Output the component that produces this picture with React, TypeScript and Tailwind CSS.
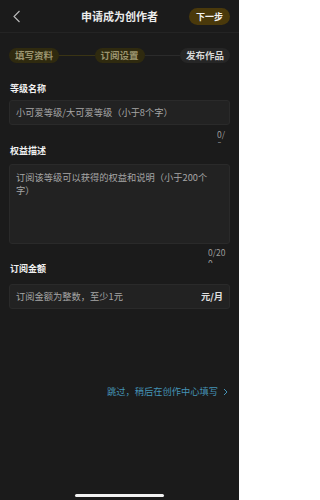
const font = { fontFamily: '"Noto Sans CJK SC", "Noto Sans", sans-serif' };

export default function App() {
  return (
    <div className="w-[239px] h-[500px] bg-[#1b1b1b] text-white flex flex-col overflow-hidden relative" style={font}>
      {/* Header */}
      <div className="h-[33px] flex items-center px-[10px] border-b border-[#242424] shrink-0">
        <div className="w-[40px] flex items-center">
          <svg width="9" height="13" viewBox="0 0 9 13" className="ml-[2px]">
            <path d="M7.5 1 L2 6.5 L7.5 12" fill="none" stroke="#bdbdbd" strokeWidth="1.1" />
          </svg>
        </div>
        <div className="flex-1 text-center text-[11px] font-bold leading-none text-[#ececec] pt-[1px]">申请成为创作者</div>
        <div className="w-[40px] flex justify-end">
          <div className="h-[17px] w-[42px] -mr-[1px] rounded-full bg-[#4a390b] flex items-center justify-center text-[9px] font-bold text-[#f2f2f2] leading-none">
            下一步
          </div>
        </div>
      </div>

      {/* Steps */}
      <div className="flex items-center px-[9px] mt-[15px] shrink-0">
        <div className="h-[15px] w-[50px] rounded-full bg-[#2f2a0f] flex items-center justify-center text-[9.5px] font-bold text-[#9c9570] leading-none">
          填写资料
        </div>
        <div className="flex-1 h-px bg-[#3a3414]" />
        <div className="h-[15px] w-[50px] rounded-full bg-[#2f2a0f] flex items-center justify-center text-[9.5px] font-bold text-[#9c9570] leading-none">
          订阅设置
        </div>
        <div className="flex-1 h-px bg-[#2b2b2b]" />
        <div className="h-[15px] w-[50px] rounded-full bg-[#262626] flex items-center justify-center text-[9.5px] font-bold text-[#d8d8d8] leading-none">
          发布作品
        </div>
      </div>

      {/* Form */}
      <div className="px-[9px] flex flex-col">
        <div className="mt-[19px] h-[12px] flex items-center text-[9px] font-bold text-[#f0f0f0] leading-none pl-px">等级名称</div>
        <div className="mt-[6px] h-[25px] rounded-[3px] bg-[#222222] border border-[#2a2a2a] flex items-center px-[6px] text-[9.25px] text-[#a6a6a6] leading-none">
          小可爱等级/大可爱等级（小于8个字）
        </div>
        <div className="flex justify-end pr-[4px]">
          <div className="w-[9px] h-[14px] overflow-hidden text-[8.5px] leading-[11px] text-[#9a9a9a] mt-[4px] break-all">0/8</div>
        </div>

        <div className="mt-[1px] h-[12px] flex items-center text-[9px] font-bold text-[#f0f0f0] leading-none pl-px">权益描述</div>
        <div className="mt-[8px] h-[80px] rounded-[3px] bg-[#222222] border border-[#2a2a2a] px-[6px] pt-[6px] text-[9.25px] text-[#a6a6a6] leading-[13px]">
          订阅该等级可以获得的权益和说明（小于200个
          <br />
          字）
        </div>
        <div className="flex justify-end pr-[3px]">
          <div className="w-[19px] h-[16px] overflow-hidden text-[8.5px] leading-[11px] text-[#9a9a9a] mt-[3px] break-all">0/200</div>
        </div>

        <div className="mt-[-1px] h-[12px] flex items-center text-[9px] font-bold text-[#f0f0f0] leading-none pl-px">订阅金额</div>
        <div className="mt-[10px] h-[25px] rounded-[3px] bg-[#222222] border border-[#2a2a2a] flex items-center justify-between px-[6px] text-[9.25px] leading-none">
          <span className="text-[#a6a6a6]">订阅金额为整数，至少1元</span>
          <span className="text-[#e0e0e0] font-bold">元/月</span>
        </div>

        <div className="mt-[78px] flex justify-end items-center pr-[2px] text-[9.25px] text-[#4593b6] leading-none gap-[5px]">
          <span>跳过，稍后在创作中心填写</span>
          <svg width="5" height="8" viewBox="0 0 5 8">
            <path d="M1 1 L4 4 L1 7" fill="none" stroke="#4593b6" strokeWidth="1" />
          </svg>
        </div>
      </div>

      {/* Home indicator */}
      <div className="absolute bottom-[3px] left-[75px] w-[89px] h-[3px] rounded-full bg-[#f2f2f2]" />
    </div>
  );
}
